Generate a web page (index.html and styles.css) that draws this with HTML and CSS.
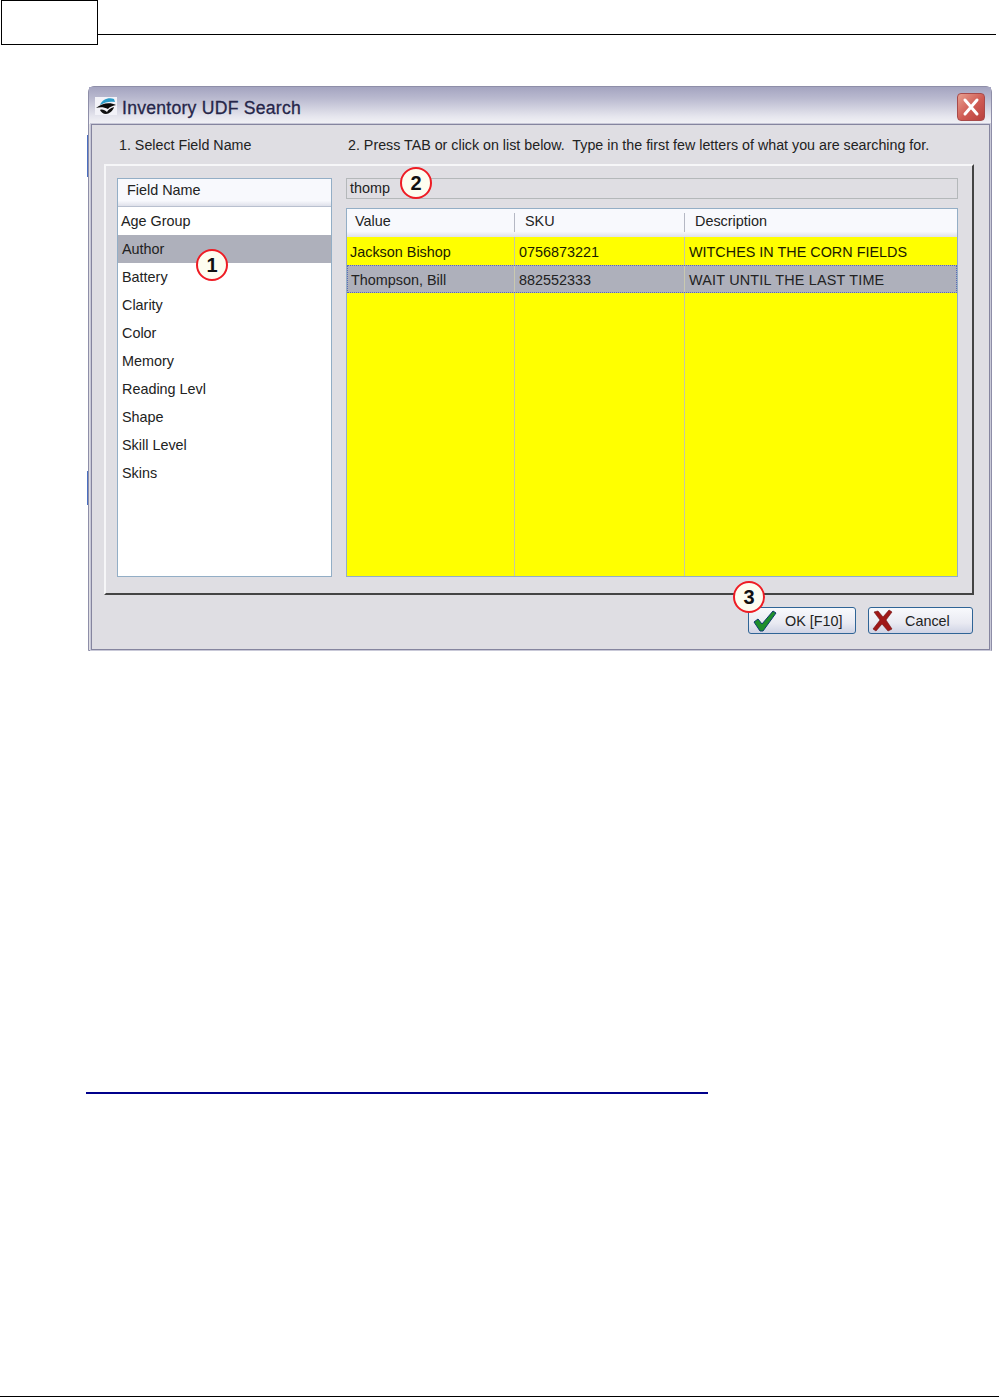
FILE: index.html
```html
<!DOCTYPE html>
<html lang="en">
<head>
<meta charset="utf-8">
<title>Inventory UDF Search</title>
<link rel="stylesheet" href="styles.css">
</head>
<body>
<div class="page">
  <header class="page-head">
    <div class="page-box"></div>
    <div class="page-rule"></div>
  </header>

  <section class="window">
    <div class="edge-mark edge-mark-a"></div>
    <div class="edge-mark edge-mark-b"></div>
    <div class="titlebar">
      <svg class="app-icon" viewBox="0 0 22 18" width="22" height="18">
        <rect width="22" height="18" fill="#f2f2f8"/>
        <path d="M5 8C7 3 13 0 19 2L20 5C15 4 10 5 5 8Z" fill="#2a9cc8"/>
        <path d="M1 11C7 6 15 5 21 8C17 9 14 10 13 12C9 10 5 10 1 11Z" fill="#0a0a0a"/>
        <path d="M5 13C7 12 10 13 12 15C13 13 15 11 19 10C18 14 14 17 11 17C8 17 6 15 5 13Z" fill="#111"/>
      </svg>
      <span class="title-text">Inventory UDF Search</span>
      <div class="close-btn">
        <svg viewBox="0 0 28 28" width="28" height="28">
          <path d="M8 7L20 21M20 7L8 21" stroke="#fff" stroke-width="3" stroke-linecap="round"/>
        </svg>
      </div>
    </div>

    <div class="client">
      <div class="steps">
        <span class="step-one">1. Select Field Name</span>
        <span class="step-two">2. Press TAB or click on list below.&nbsp; Type in the first few letters of what you are searching for.</span>
      </div>

      <div class="panel">
        <div class="field-list">
          <div class="field-head">Field Name</div>
          <div class="field-item first">Age Group</div>
          <div class="field-item selected">Author</div>
          <div class="field-item">Battery</div>
          <div class="field-item">Clarity</div>
          <div class="field-item">Color</div>
          <div class="field-item">Memory</div>
          <div class="field-item">Reading Levl</div>
          <div class="field-item">Shape</div>
          <div class="field-item">Skill Level</div>
          <div class="field-item">Skins</div>
        </div>

        <div class="results">
          <div class="search-box">thomp</div>
          <div class="grid">
            <div class="grid-head">
              <div class="col col-value"><span class="th">Value</span></div>
              <div class="col col-sku"><span class="th">SKU</span></div>
              <div class="col col-desc"><span class="th">Description</span></div>
            </div>
            <div class="grid-body">
              <div class="grid-lines">
                <div class="col-value line"></div>
                <div class="col-sku line"></div>
              </div>
              <div class="row">
                <div class="col col-value">Jackson Bishop</div>
                <div class="col col-sku">0756873221</div>
                <div class="col col-desc">WITCHES IN THE CORN FIELDS</div>
              </div>
              <div class="row row-active">
                <div class="col col-value">Thompson, Bill</div>
                <div class="col col-sku">882552333</div>
                <div class="col col-desc wide">WAIT UNTIL THE LAST TIME</div>
              </div>
            </div>
          </div>
        </div>
      </div>

      <div class="actions">
        <div class="btn btn-ok">
          <svg viewBox="0 0 26 24" width="26" height="24">
            <path d="M2 13L6 10L10 15L21 2L24 4L11 22L8 22Z" fill="#1f8f2c" stroke="#0e3a6e" stroke-width="1"/>
          </svg>
          <span class="btn-label">OK [F10]</span>
        </div>
        <div class="btn btn-cancel">
          <svg viewBox="0 0 22 24" width="22" height="24">
            <path d="M2 3L6 2L11 8L17 1L20 3L14 11L20 20L16 22L10 15L4 22L1 20L8 11Z" fill="#a01818" stroke="#6d1010" stroke-width=".6"/>
          </svg>
          <span class="btn-label">Cancel</span>
        </div>
      </div>
    </div>

    <div class="callout callout-1">1</div>
    <div class="callout callout-2">2</div>
    <div class="callout callout-3">3</div>
  </section>

  <div class="blue-rule"></div>
  <div class="foot-rule"></div>
</div>
</body>
</html>
```

FILE: styles.css
```css
* { box-sizing: border-box; }
html, body { margin: 0; padding: 0; background: #fff; }
body { font-family: "Liberation Sans", Arial, sans-serif; color: #222; }
.page { width: 999px; height: 1397px; display: flex; flex-direction: column; }

.page-head { display: flex; height: 45px; padding-left: 1px; }
.page-box { width: 97px; height: 45px; border: 1px solid #000; }
.page-rule { width: 898px; height: 1px; margin-top: 34px; background: #000; }

.window {
  position: relative;
  width: 904px; height: 565px;
  margin: 41px 0 0 88px;
  display: flex; flex-direction: column;
  border: 1px solid #8e8ea8;
  border-radius: 6px 6px 0 0;
  background: #dfdee3;
}
.edge-mark { position: absolute; left: -2px; width: 1px; background: #4a6fc0; }
.edge-mark-a { top: 48px; height: 42px; }
.edge-mark-b { top: 384px; height: 34px; }

.titlebar {
  height: 37px; flex: none;
  display: flex; align-items: center;
  padding: 3px 6px 0 6px;
  background: linear-gradient(#a4a4c0 0%, #b9b9cf 30%, #e6e6ee 80%, #f2f2f6 100%);
}
.app-icon { flex: none; margin: -3px 5px 0 0; }
.title-text { font-size: 17.6px; margin-top: 2px; color: #26264a; letter-spacing: .25px; -webkit-text-stroke: .3px #26264a; }
.close-btn {
  width: 28px; height: 28px; margin-left: auto;
  border-radius: 4px;
  border: 1px solid #a84a4a;
  background: linear-gradient(135deg, #e8a090, #cf5a52 55%, #b8403e);
}
.close-btn svg { display: block; margin: -1px; }

.client {
  flex: 1; display: flex; flex-direction: column;
  margin: 0 1px 0 2px;
  border: 1px solid #85859f;
  background: #dfdee3;
  box-shadow: 0 0 0 1px #c9c9d8;
}
.steps { height: 39px; flex: none; display: flex; align-items: center; font-size: 14.28px; padding-left: 27px; }
.step-one { width: 229px; flex: none; }
.step-two { white-space: nowrap; }

.panel {
  width: 870px; height: 431px; margin-left: 12px; flex: none;
  display: flex; gap: 14px;
  padding: 12px 15px 16px 11px;
  border: 2px solid #444;
  border-top-color: #f6f6f8; border-left-color: #f6f6f8;
}
.field-list { width: 215px; height: 399px; flex: none; background: #fff; border: 1px solid #93aec6; font-size: 14.4px; }
.field-head { height: 28px; padding: 1px 0 0 9px; background: linear-gradient(#f8f9fd 80%, #dfe1ea); border-bottom: 1px solid #b9c0cf; line-height: 20px; }
.field-item { height: 28px; line-height: 28px; padding-left: 4px; }
.field-item.first { padding-left: 3px; }
.field-item.selected { background: #aeb0bb; }

.results { flex: 1; display: flex; flex-direction: column; gap: 9px; min-width: 0; }
.search-box { width: 612px; height: 21px; background: #dfdee3; border: 1px solid #b4b8ba; font-size: 14.4px; line-height: 18px; padding-left: 3px; }
.grid { width: 612px; height: 369px; border: 1px solid #93aec6; display: flex; flex-direction: column; font-size: 14.4px; }
.grid-head { height: 28px; flex: none; display: flex; align-items: flex-start; background: linear-gradient(#f8f9fd 80%, #dfe1ea); }
.grid-head .col { height: 19px; margin-top: 4px; padding-left: 10px; line-height: 16px; }
.grid-head .col-value { padding-left: 8px; }
.grid-head .col-value, .grid-head .col-sku { border-right: 1px solid #b5b8c4; }
.col { flex: none; white-space: nowrap; }
.col-value { width: 168px; }
.col-sku { width: 170px; }
.col-desc { width: 272px; }
.grid-body { position: relative; flex: 1; background: #ffff00; color: #1a1a00; }
.grid-lines { position: absolute; inset: 0; display: flex; }
.grid-lines .line { border-right: 1px solid #c6c9a0; }
.row { position: relative; height: 28px; display: flex; align-items: stretch; }
.row .col { padding-left: 4px; padding-top: 1px; line-height: 28px; }
.row .col-value { padding-left: 3px; }
.row-active { background: #aeb0bb; color: #222; outline: 1px dotted #5a6ab8; outline-offset: -1px; }
.row-active .col-value { padding-left: 4px; }
.row-active .col-value, .row-active .col-sku { border-right: 1px solid #c9c9b0; }
.wide { letter-spacing: .2px; }

.actions { flex: 1; display: flex; justify-content: flex-end; gap: 12px; padding: 12px 16px 0 0; }
.btn {
  width: 108px; height: 27px; flex: none;
  display: flex; align-items: center;
  border: 1px solid #2f6496; border-radius: 3px;
  background: linear-gradient(#f8f9fc, #e9eaf2 60%, #cfd3e4);
  font-size: 14.4px; color: #222;
}
.btn-cancel { width: 105px; }
.btn svg { flex: none; margin-left: 3px; }
.btn-ok .btn-label { margin-left: 7px; }
.btn-cancel .btn-label { margin-left: 11px; }

.callout {
  position: absolute;
  width: 32px; height: 32px;
  border-radius: 50%;
  border: 2px solid #ee1c24;
  background: #fdfdf0;
  color: #111;
  font: 700 20px/28px "Liberation Sans", Arial, sans-serif;
  text-align: center;
}
.callout-1 { left: 107px; top: 162px; }
.callout-2 { left: 311px; top: 80px; }
.callout-3 { left: 644px; top: 494px; }

.blue-rule { width: 622px; height: 2px; margin: 441px 0 0 86px; background: #00008b; flex: none; }
.foot-rule { width: 999px; height: 1px; margin-top: 302px; background: #000; flex: none; }
```
